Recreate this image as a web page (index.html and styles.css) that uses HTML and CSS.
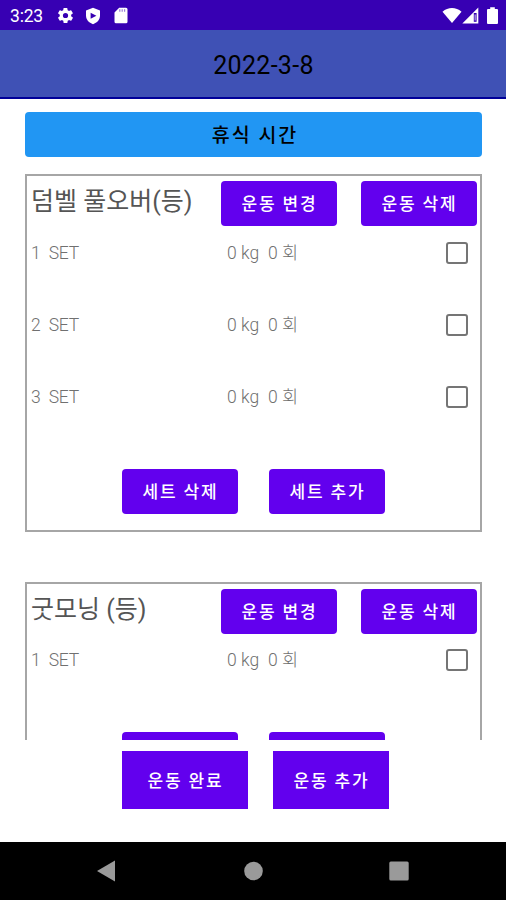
FILE: index.html
```html
<!DOCTYPE html>
<html lang="ko">
  <head>
    <meta charset="UTF-8" />
    <meta name="viewport" content="width=device-width, initial-scale=1.0" />
    <title>2022-3-8</title>
    <link rel="stylesheet" href="styles.css">
  </head>
  <body>
    <div id="statusbar">
      <span class="clock">3:23</span>
      <svg class="gear" width="19" height="19" viewBox="0 0 24 24">
        <path fill="#fff" fill-rule="evenodd" d="M19.1 12.9a7 7 0 0 0 0-1.8l2-1.6a.5.5 0 0 0 .1-.6l-1.9-3.3a.5.5 0 0 0-.6-.2l-2.4 1a7 7 0 0 0-1.6-1l-.4-2.5a.5.5 0 0 0-.5-.4h-3.8a.5.5 0 0 0-.5.4l-.4 2.5a7 7 0 0 0-1.6 1l-2.4-1a.5.5 0 0 0-.6.2L2.700 8.900a.5.5 0 0 0 .1.6l2 1.600a7 7 0 0 0 0 1.800l-2 1.600a.5.5 0 0 0-.1.6l1.900 3.300c.1.2.4.3.6.2l2.400-1a7 7 0 0 0 1.600 1l.4 2.500c0 .2.2.4.5.4h3.800c.2 0 .5-.2.5-.4l.4-2.500a7 7 0 0 0 1.600-1l2.400 1c.2.1.5 0 .6-.2l1.900-3.300a.5.5 0 0 0-.1-.6zM12 15.300a3.300 3.300 0 1 1 0-6.600 3.300 3.300 0 0 1 0 6.600z" />
      </svg>
      <svg class="shield" width="16" height="18" viewBox="0 0 16 18">
        <path fill="#fff" d="M8 .8 15 3.500v5c0 4.200-3 7.300-7 8.700-4-1.400-7-4.500-7-8.700v-5z" />
        <path fill="#3700b3" d="M5.600 5.800 11.400 8.800 5.600 11.800z" />
      </svg>
      <svg class="sdcard" width="14" height="17" viewBox="0 0 14 17">
        <path fill="#fff" d="M5.200.8H12a1.500 1.500 0 0 1 1.500 1.500v12.400a1.500 1.500 0 0 1-1.500 1.500H2a1.500 1.500 0 0 1-1.500-1.500V5.500z" />
        <path stroke="#3700b3" stroke-width="1.200" d="M5.800 2.300v2.500M8.200 2.300v2.500M10.600 2.300v2.500" opacity=".5" />
      </svg>
      <span class="spacer"></span>
      <svg class="wifi" width="20" height="17" viewBox="0 0 20 17">
        <path fill="#fff" d="M.5 4.800C6-.2 14-.2 19.500 4.800L10 16z" />
      </svg>
      <svg class="signal" width="17" height="17" viewBox="0 0 17 17">
        <path fill="#fff" d="M16.300.5v16H.3z" />
        <path fill="#3700b3" d="M11.800 6h2.800v8.800h-2.800z" />
        <path fill="#fff" d="M12.700 7.500h.8v6h-.8z" />
      </svg>
      <svg class="battery" width="11" height="17" viewBox="0 0 11 17">
        <path fill="#fff" d="M3.200.2h4.600v1.700H10a1 1 0 0 1 1 1V16a1 1 0 0 1-1 1H1a1 1 0 0 1-1-1V2.900a1 1 0 0 1 1-1h2.200z" />
      </svg>
    </div>

    <div id="header">2022-3-8</div>

    <div id="content">
      <button class="rest">휴식 시간</button>

      <div class="card">
        <div class="card-head">
          <span class="title">덤벨 풀오버(등)</span>
          <button>운동 변경</button>
          <button>운동 삭제</button>
        </div>
        <div class="set">
          <span class="no">1&nbsp; SET</span>
          <span class="kg">0 kg</span>
          <span class="count">0 회</span>
          <input type="checkbox" />
        </div>
        <div class="set">
          <span class="no">2&nbsp; SET</span>
          <span class="kg">0 kg</span>
          <span class="count">0 회</span>
          <input type="checkbox" />
        </div>
        <div class="set">
          <span class="no">3&nbsp; SET</span>
          <span class="kg">0 kg</span>
          <span class="count">0 회</span>
          <input type="checkbox" />
        </div>
        <div class="card-foot">
          <button>세트 삭제</button>
          <button>세트 추가</button>
        </div>
      </div>

      <div class="card">
        <div class="card-head">
          <span class="title">굿모닝 (등)</span>
          <button>운동 변경</button>
          <button>운동 삭제</button>
        </div>
        <div class="set">
          <span class="no">1&nbsp; SET</span>
          <span class="kg">0 kg</span>
          <span class="count">0 회</span>
          <input type="checkbox" />
        </div>
        <div class="card-foot">
          <button aria-label="세트 삭제"></button>
          <button aria-label="세트 추가"></button>
        </div>
      </div>
    </div>

    <div id="actions">
      <button class="done">운동 완료</button>
      <button class="add">운동 추가</button>
    </div>

    <div id="navbar">
      <svg width="18" height="22" viewBox="0 0 18 22">
        <path fill="#9a9a9a" d="M18 .5v21L0 11z" />
      </svg>
      <svg class="home" width="19" height="20" viewBox="0 0 19 20">
        <circle cx="9.500" cy="10" r="9.300" fill="#9a9a9a" />
      </svg>
      <svg width="20" height="20" viewBox="0 0 20 20">
        <rect x=".3" y=".5" width="19.400" height="19" rx="1.500" fill="#9a9a9a" />
      </svg>
    </div>
  </body>
</html>
```

FILE: styles.css
```css
* {
  box-sizing: border-box;
}

body {
  font-family: Roboto, "Noto Sans CJK KR", sans-serif;
  margin: 0;
  height: 900px;
  display: flex;
  flex-direction: column;
  background-color: #fff;
  overflow: hidden;
}

svg {
  display: block;
}

#statusbar {
  height: 30px;
  display: flex;
  align-items: center;
  padding: 1px 8px 0 10px;
  background-color: #3700b3;
  color: #fff;
}

.clock {
  width: 46px;
  font-size: 17.5px;
  letter-spacing: -0.2px;
  padding-top: 1px;
}

.shield {
  margin-left: 10px;
}

.sdcard {
  margin-left: 13px;
}

.spacer {
  flex: 1;
}

.signal {
  margin: 0 8px 0 0;
}

#header {
  height: 69px;
  padding: 3px 0 0 21px;
  background-color: #3f51b5;
  border-bottom: 2px solid #000099;
  color: #000;
  font-size: 25px;
  letter-spacing: 0.3px;
  line-height: 66px;
  text-align: center;
}

#content {
  height: 641px;
  padding: 13px 24px 0 25px;
  overflow: hidden;
}

button {
  width: 116px;
  height: 45px;
  padding: 0 0 2px 1px;
  border: none;
  border-radius: 4px;
  background-color: #6200ee;
  color: #fff;
  font-family: inherit;
  font-size: 17px;
  font-weight: 500;
  letter-spacing: 1.8px;
}

.rest {
  display: block;
  width: 100%;
  padding-left: 3px;
  background-color: #2196f3;
  color: #000;
  font-size: 19.5px;
  letter-spacing: 2px;
}

.card {
  margin-top: 17px;
  padding: 5px 3px 16px 4px;
  border: 2px solid #a6a6a6;
}

.card + .card {
  margin-top: 50px;
}

.card-head {
  display: flex;
  gap: 24px;
}

.title {
  width: 166px;
  padding-top: 2px;
  color: #555;
  font-size: 25px;
  line-height: 38px;
  white-space: nowrap;
}

.set {
  display: flex;
  align-items: center;
  height: 72.4px;
  padding: 0 9px 19px 0;
  color: #707070;
  font-size: 17.5px;
  font-weight: 300;
  line-height: 20px;
}

.no {
  width: 196px;
  letter-spacing: -0.2px;
}

.kg {
  width: 41px;
}

.count {
  flex: 1;
}

input {
  appearance: none;
  width: 22px;
  height: 22px;
  margin: 0;
  border: 2px solid #757575;
  border-radius: 3px;
}

.card-foot {
  display: flex;
  gap: 31px;
  margin: 25.6px 0 0 91px;
}

#actions {
  height: 102px;
  display: flex;
  gap: 25px;
  padding: 11px 0 0 122px;
}

#actions button {
  height: 58px;
  border-radius: 0;
}

#actions .done {
  width: 126px;
}

#navbar {
  height: 58px;
  display: flex;
  justify-content: space-between;
  align-items: center;
  padding: 0 97px;
  background-color: #000;
}

.home {
  margin-left: 2px;
}
```
